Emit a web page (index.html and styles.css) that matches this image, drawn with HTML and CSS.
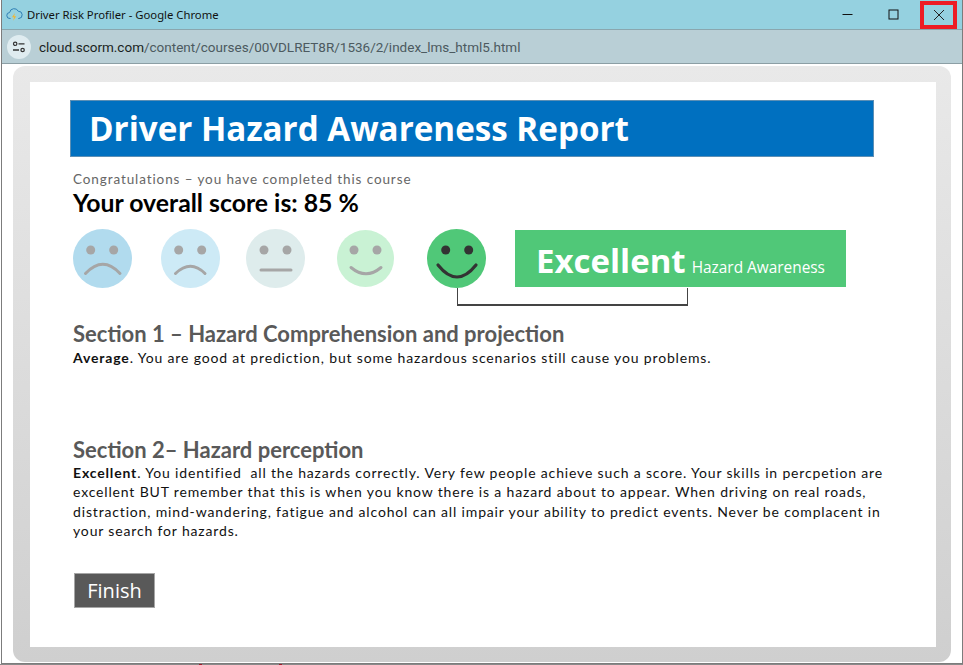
FILE: index.html
```html
<!DOCTYPE html>
<html lang="en">
<head>
    <meta charset="UTF-8">
    <title>Driver Risk Profiler - Google Chrome</title>
    <link rel="stylesheet" href="styles.css">
</head>
<body>
    <div class="window">
        <!-- Title bar -->
        <div class="titlebar">
            <svg class="app-icon" width="17" height="15" viewBox="0 0 17 15">
                <path d="M4.5 11.5H4a3 3 0 0 1-.4-6A4.6 4.6 0 0 1 12.3 4.3a3.6 3.6 0 0 1 .5 7.2h-.6" fill="none" stroke="#2f7fb5" stroke-width="1"/>
                <path d="M8.8 6 6 10.2h2l-.8 3.6 3-4.6H8.2z" fill="#f2b632"/>
            </svg>
            <span class="window-title">Driver Risk Profiler - Google Chrome</span>
            <div class="window-controls">
                <span class="control">
                    <svg width="11" height="11" viewBox="0 0 11 11"><path d="M0.5 5.5h10" stroke="#111" fill="none"/></svg>
                </span>
                <span class="control">
                    <svg width="11" height="11" viewBox="0 0 11 11"><rect x="1" y="1" width="9" height="9" stroke="#111" fill="none"/></svg>
                </span>
                <span class="control control-close">
                    <svg width="12" height="12" viewBox="0 0 12 12"><path d="M1 1l10 10M11 1L1 11" stroke="#222" fill="none"/></svg>
                </span>
            </div>
        </div>

        <!-- Address bar -->
        <div class="addressbar">
            <span class="site-info">
                <svg width="14" height="12" viewBox="0 0 14 12">
                    <circle cx="3.2" cy="2.8" r="1.7" fill="none" stroke="#333" stroke-width="1.2"/>
                    <path d="M6.5 2.8h6M1 9h6" stroke="#333" stroke-width="1.3" fill="none"/>
                    <circle cx="10.6" cy="9" r="1.7" fill="none" stroke="#333" stroke-width="1.2"/>
                </svg>
            </span>
            <span class="url"><span class="url-host">cloud.scorm.com</span>/content/courses/00VDLRET8R/1536/2/index_lms_html5.html</span>
        </div>

        <!-- Course popup -->
        <div class="stage">
            <div class="frame">
                <div class="slide">
                    <h1 class="banner">Driver Hazard Awareness Report</h1>
                    <p class="congrats">Congratulations – you have completed this course</p>
                    <p class="score">Your overall score is: 85 %</p>

                    <div class="rating">
                        <div class="faces">
                            <svg class="face" width="60" height="60" viewBox="0 0 60 60">
                                <circle cx="29.5" cy="29.5" r="29.5" fill="#b1dbee"/>
                                <circle cx="17.7" cy="21" r="4.5" fill="#a6a6a6"/>
                                <circle cx="40.7" cy="21" r="4.5" fill="#a6a6a6"/>
                                <path d="M12.5 44.500Q30 26 47 44.500" fill="none" stroke="#a6a6a6" stroke-width="3" stroke-linecap="round"/>
                            </svg>
                            <svg class="face" width="60" height="60" viewBox="0 0 60 60">
                                <circle cx="29.5" cy="29.5" r="29.5" fill="#cdeaf6"/>
                                <circle cx="17.7" cy="21" r="4.5" fill="#a6a6a6"/>
                                <circle cx="40.7" cy="21" r="4.5" fill="#a6a6a6"/>
                                <path d="M14.5 44.500Q29.5 30 44 44.500" fill="none" stroke="#a6a6a6" stroke-width="3" stroke-linecap="round"/>
                            </svg>
                            <svg class="face" width="60" height="60" viewBox="0 0 60 60">
                                <circle cx="29.5" cy="29.5" r="29.5" fill="#deecec"/>
                                <circle cx="18" cy="21" r="4.5" fill="#a6a6a6"/>
                                <circle cx="41" cy="21" r="4.5" fill="#a6a6a6"/>
                                <path d="M15 41H45" fill="none" stroke="#a6a6a6" stroke-width="3" stroke-linecap="round"/>
                            </svg>
                            <svg class="face" width="58" height="60" viewBox="0 0 58 60">
                                <circle cx="28.5" cy="29.5" r="28.5" fill="#c9f2d4"/>
                                <circle cx="17" cy="21" r="4.5" fill="#a6a6a6"/>
                                <circle cx="40" cy="21" r="4.5" fill="#a6a6a6"/>
                                <path d="M14 38.500Q29 51 44 38.500" fill="none" stroke="#a6a6a6" stroke-width="3" stroke-linecap="round"/>
                            </svg>
                            <svg class="face" width="60" height="60" viewBox="0 0 60 60">
                                <circle cx="29.500" cy="29.5" r="29.5" fill="#50c878"/>
                                <circle cx="18.7" cy="21" r="4.5" fill="#333"/>
                                <circle cx="41.7" cy="21" r="4.5" fill="#333"/>
                                <path d="M11 36Q30 60 49 36" fill="none" stroke="#333" stroke-width="3.2" stroke-linecap="round"/>
                            </svg>
                        </div>
                        <div class="result-tag">
                            <span class="result-word">Excellent</span>
                            <span class="result-label">Hazard Awareness</span>
                        </div>
                        <div class="connector"></div>
                    </div>

                    <section class="section section-one">
                        <h2>Section 1 – Hazard Comprehension and projection</h2>
                        <p><b>Average</b>. You are good at prediction, but some hazardous scenarios still cause you problems.</p>
                    </section>

                    <section class="section section-two">
                        <h2>Section 2– Hazard perception</h2>
                        <p><b>Excellent</b>. You identified&nbsp; all the hazards correctly. Very few people achieve such a score. Your skills in percpetion are excellent BUT remember that this is when you know there is a hazard about to appear. When driving on real roads, distraction, mind-wandering, fatigue and alcohol can all impair your ability to predict events. Never be complacent in your search for hazards.</p>
                    </section>

                    <button class="finish" type="button">Finish</button>
                </div>
            </div>
        </div>
    </div>
    <div class="under-window">
        <span class="red-mark"></span>
        <span class="red-mark"></span>
    </div>
</body>
</html>
```

FILE: styles.css
```css
html, body {
    margin: 0;
    height: 100%;
    overflow: hidden;
    background: #fff;
}

.window {
    height: 664px;
    box-sizing: border-box;
    border-left: 1px solid #7c7c7c;
    border-right: 1px solid #7c7c7c;
    border-bottom: 1px solid #7c7c7c;
    margin-left: 1px;
    display: flex;
    flex-direction: column;
}

.under-window {
    height: 1px;
    display: flex;
    gap: 77px;
    padding-left: 199px;
    background: #8a8a8a;
}

.red-mark {
    width: 3px;
    height: 1px;
    background: #a01a2c;
}

/* Title bar */
.titlebar {
    height: 29px;
    flex: none;
    display: flex;
    align-items: center;
    background: #95d1e0;
    border-bottom: 1px solid #8aa6ae;
    font-family: "Noto Sans", sans-serif;
    font-size: 11.3px;
    color: #111;
    padding-left: 4px;
}

.app-icon {
    margin-right: 4px;
}

.window-controls {
    margin-left: auto;
    display: flex;
    align-items: center;
}

.control {
    width: 46px;
    height: 24px;
    display: flex;
    align-items: center;
    justify-content: center;
}

.control-close {
    width: 37px;
    height: 28px;
    box-sizing: border-box;
    border: 4px solid #ed1c24;
    margin: 0 5px 0 4px;
}

/* Address bar */
.addressbar {
    height: 33px;
    flex: none;
    display: flex;
    align-items: center;
    background: #b9cfd6;
    border-bottom: 1px solid #8c9fa5;
    padding-left: 5px;
    font-family: "Roboto", sans-serif;
    font-size: 13.5px;
    color: #4c5a60;
}

.site-info {
    width: 24px;
    height: 24px;
    border-radius: 50%;
    background: #dfecf0;
    display: flex;
    align-items: center;
    justify-content: center;
    margin-right: 8px;
}

.url-host {
    color: #1a1f22;
}

/* Popup frame */
.stage {
    flex: 1;
    padding: 2px 11px 1px 11px;
    min-height: 0;
    background: #fff;
}

.frame {
    height: 100%;
    box-sizing: border-box;
    padding: 16px 15px 15px 17px;
    border-radius: 12px;
    background: linear-gradient(#e9e9e9, #cfcfcf);
}

.slide {
    height: 100%;
    box-sizing: border-box;
    background: #fff;
    padding: 18px 40px 0;
    font-family: "Lato", sans-serif;
}

.banner {
    margin: 0 22px 0 0;
    height: 57px;
    box-sizing: border-box;
    background: #0070c0;
    border: 1px solid #5c8fb5;
    padding-left: 18px;
    color: #fff;
    font-family: "Open Sans", sans-serif;
    font-weight: 700;
    font-size: 33.2px;
    line-height: 55px;
}

.congrats {
    margin: 14px 0 0 3px;
    font-size: 13.5px;
    line-height: 16px;
    letter-spacing: 0.9px;
    color: #666;
}

.score {
    margin: 1px 0 0 3px;
    font-size: 24.8px;
    line-height: 29px;
    font-weight: 700;
    color: #000;
}

/* Faces and result tag */
.rating {
    position: relative;
    display: flex;
    margin: 12px 0 0 3px;
    height: 60px;
}

.faces {
    display: flex;
    gap: 28px;
    width: 442px;
    flex: none;
}

.face:nth-child(3) {
    margin-left: -3px;
}

.face:nth-child(4) {
    margin-left: 3px;
}

.face:nth-child(5) {
    margin-left: 4px;
}

.result-tag {
    width: 331px;
    height: 57px;
    margin-top: 1px;
    box-sizing: border-box;
    background: #50c878;
    color: #fff;
    padding-left: 21px;
    display: flex;
    align-items: baseline;
    font-family: "Open Sans", sans-serif;
    line-height: 61px;
    white-space: nowrap;
}

.result-word {
    font-size: 33px;
    font-weight: 700;
    margin-right: 6px;
}

.result-label {
    font-size: 15.4px;
}

.connector {
    position: absolute;
    left: 384px;
    top: 59px;
    width: 229px;
    height: 16px;
    border: 1px solid #444;
    border-width: 0 1px 2px;
}

/* Text sections */
.section {
    margin-left: 3px;
    color: #111;
}

.section h2 {
    margin: 0;
    font-size: 22px;
    line-height: 25px;
    font-weight: 700;
    color: #595959;
}

.section p {
    margin: 2px 0 0;
    font-size: 14px;
    line-height: 19.3px;
    letter-spacing: 0.84px;
}

.section-one {
    margin-top: 32px;
    height: 116px;
}

.section-two {
    height: 136px;
}

.section-two p {
    margin-top: 1px;
}

.finish {
    display: block;
    margin: 0 0 0 4px;
    width: 81px;
    height: 35px;
    padding: 0;
    background: #595959;
    border: 1px solid #a6a6a6;
    color: #fff;
    font-family: "Open Sans", sans-serif;
    font-size: 20px;
}
```
